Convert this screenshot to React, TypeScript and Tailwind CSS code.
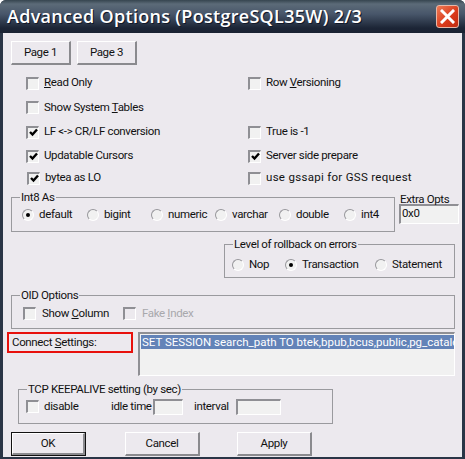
import React from 'react';

const face = 'bg-[#ece9ee]';

const Check: React.FC<{ checked?: boolean; disabled?: boolean }> = ({ checked, disabled }) => (
  <span className={`flex h-[13px] w-[13px] shrink-0 items-center justify-center border-t-2 border-l-2 border-r border-b border-t-[#8f8f94] border-l-[#8f8f94] border-r-white border-b-white ${disabled ? face : 'bg-[#f1f1f1]'}`}>
    {checked && (
      <svg width="9" height="9" viewBox="0 0 9 9">
        <path d="M1 4 L3.5 6.5 L8 1.5" fill="none" stroke="#000" strokeWidth="2.4" />
      </svg>
    )}
  </span>
);

const CheckRow: React.FC<{ checked?: boolean; disabled?: boolean; gap?: string; children: React.ReactNode }> = ({ checked, disabled, gap = 'gap-[5px]', children }) => (
  <div className={`flex items-center ${gap}`}>
    <Check checked={checked} disabled={disabled} />
    <span className={disabled ? 'text-[#a8a8ac]' : ''}>{children}</span>
  </div>
);

const Radio: React.FC<{ checked?: boolean; label: string }> = ({ checked, label }) => (
  <div className="flex items-center gap-[5px]">
    <span className="flex h-[12px] w-[12px] shrink-0 items-center justify-center rounded-full border border-t-[#97979b] border-l-[#97979b] border-r-white border-b-white bg-[#f1f1f1]">
      {checked && <span className="h-[4px] w-[4px] rounded-full bg-black" />}
    </span>
    <span>{label}</span>
  </div>
);

const Group: React.FC<{ title: string; className: string; children: React.ReactNode }> = ({ title, className, children }) => (
  <div className={`relative border border-[#9a9a9e] ${className}`}>
    <span className={`absolute -top-[8px] left-[8px] px-[1px] leading-[14px] ${face}`}>{title}</span>
    {children}
  </div>
);

const PushButton: React.FC<{ label: string; className: string }> = ({ label, className }) => (
  <button className={`flex items-center justify-center border-t border-l border-r-2 border-b-2 border-t-white border-l-white border-r-[#8a8a8e] border-b-[#8a8a8e] ${face} ${className}`}>
    {label}
  </button>
);

const Field: React.FC<{ className: string; children?: React.ReactNode }> = ({ className, children }) => (
  <div className={`border-t-2 border-l-2 border-r border-b border-t-[#8f8f94] border-l-[#8f8f94] border-r-white border-b-white bg-[#f1f1f1] ${className}`}>
    {children}
  </div>
);

const App: React.FC = () => {
  return (
    <div className="flex h-[459px] w-[465px] flex-col overflow-hidden rounded-t-[6px] bg-[#2a3546] font-['Roboto',sans-serif] text-[11.5px] tracking-[-0.35px] text-[#111]">
      {/* title bar */}
      <div className="flex h-[33px] shrink-0 items-center justify-between bg-[linear-gradient(to_bottom,#36454f_0px,#5c6b78_4px,#48566a_14px,#1c2536_28px,#1a2232_33px)] pl-[7px] pr-[6px]">
        <span className="font-['Open_Sans',sans-serif] text-[18px] font-semibold tracking-[0.3px] text-white [text-shadow:1px_1px_0_#10182a]">
          Advanced Options (PostgreSQL35W) 2/3
        </span>
        <span className="flex h-[23px] w-[23px] items-center justify-center rounded-[3px] border border-[#e8b8a8] bg-[linear-gradient(135deg,#ee7a55,#d9391a_60%,#c02c10)]">
          <svg width="15" height="15" viewBox="0 0 15 15">
            <path d="M2 2 L13 13 M13 2 L2 13" stroke="#fff" strokeWidth="3" strokeLinecap="square" />
          </svg>
        </span>
      </div>

      {/* dialog body */}
      <div className={`mx-[3px] mb-[2px] flex flex-1 flex-col pl-[8px] ${face}`}>
        <div className="mt-[8px] flex gap-[6px]">
          <PushButton label="Page 1" className="h-[24px] w-[60px]" />
          <PushButton label="Page 3" className="h-[24px] w-[60px]" />
        </div>

        <div className="mt-[6px] grid grid-cols-[222px_1fr] grid-rows-[24px_25px_24px_24px_20px] pl-[15px]">
          <CheckRow><span className="underline">R</span>ead Only</CheckRow>
          <CheckRow>Row <span className="underline">V</span>ersioning</CheckRow>
          <CheckRow>Show System <span className="underline">T</span>ables</CheckRow>
          <div />
          <CheckRow checked>LF &lt;-&gt; CR/LF conversion</CheckRow>
          <CheckRow>True is -1</CheckRow>
          <CheckRow checked>Updatable Cursors</CheckRow>
          <CheckRow checked>Server side prepare</CheckRow>
          <div className="ml-px flex items-center"><CheckRow checked>bytea as LO</CheckRow></div>
          <div className="flex items-center tracking-[0.3px]"><CheckRow>use gssapi for GSS request</CheckRow></div>
        </div>

        <div className="mt-[9px] flex">
          <Group title="Int8 As" className="h-[35px] w-[384px]">
            <div className="mt-[8px] grid grid-cols-[65px_64px_64px_64px_65px_1fr] pl-[10px]">
              <Radio checked label="default" />
              <Radio label="bigint" />
              <Radio label="numeric" />
              <Radio label="varchar" />
              <Radio label="double" />
              <Radio label="int4" />
            </div>
          </Group>
          <div className="-mt-[5px] ml-[4px]">
            <div className="ml-px leading-[14px]">Extra Opts</div>
            <Field className="-mt-[2px] h-[20px] w-[60px] pl-px leading-[15px]">0x0</Field>
          </div>
        </div>

        <Group title="Level of rollback on errors" className="ml-[213px] mt-[12px] h-[34px] w-[231px]">
          <div className="mt-[11px] grid grid-cols-[53px_90px_1fr] pl-[7px]">
            <Radio label="Nop" />
            <Radio checked label="Transaction" />
            <Radio label="Statement" />
          </div>
        </Group>

        <Group title="OID Options" className="mt-[17px] h-[34px] w-[444px]">
          <div className="mt-[9px] flex pl-[11px]">
            <div className="w-[100px]"><CheckRow gap="gap-[6px]">Show <span className="underline">C</span>olumn</CheckRow></div>
            <CheckRow disabled gap="gap-[6px]">Fake <span className="underline">I</span>ndex</CheckRow>
          </div>
        </Group>

        <div className="flex">
          <div className="-ml-[4px] mt-[3px] flex h-[21px] w-[126px] items-center border-2 border-[#e8100c] pl-[3px]">
            <span>Connect <span className="underline">S</span>ettings:</span>
          </div>
          <Field className="ml-[5px] mt-[3px] h-[44px] w-[317px] overflow-hidden pl-[1px] pt-[1px]">
            <div className="h-[14px] whitespace-nowrap bg-[#6383b8] pl-px leading-[14px] tracking-normal text-white">
              SET SESSION search_path TO btek,bpub,bcus,public,pg_catalog
            </div>
          </Field>
        </div>

        <Group title="TCP KEEPALIVE setting (by sec)" className="ml-[7px] mt-[13px] h-[35px] w-[315px]">
          <div className="mt-[8px] flex items-center pl-[7px]">
            <div className="w-[85px]"><CheckRow>disable</CheckRow></div>
            <span className="w-[42px]">idle time</span>
            <Field className="h-[16px] w-[30px]" />
            <span className="ml-[11px] w-[42px]">interval</span>
            <Field className="h-[16px] w-[45px]" />
          </div>
        </Group>

        <div className="mt-[8px] flex">
          <div className={`h-[24px] w-[75px] border border-[#111] ${face}`}>
            <PushButton label="OK" className="h-full w-full" />
          </div>
          <PushButton label="Cancel" className="ml-[39px] h-[24px] w-[75px]" />
          <PushButton label="Apply" className="ml-[37px] h-[24px] w-[75px]" />
        </div>
      </div>
    </div>
  );
};

export default App;
